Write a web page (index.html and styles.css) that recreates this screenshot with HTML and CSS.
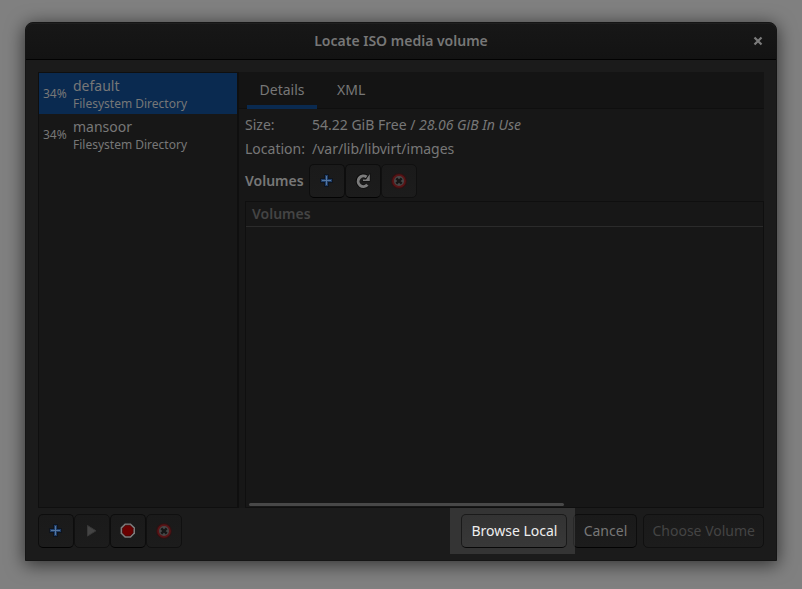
FILE: index.html
```html
<!DOCTYPE html>
<html lang="en">
<head>
<meta charset="utf-8">
<meta name="viewport" content="width=device-width, initial-scale=1">
<title>Locate ISO media volume</title>
<link rel="stylesheet" href="styles.css">
</head>
<body>
<svg class="defs" width="0" height="0" aria-hidden="true">
  <symbol id="icon-add" viewBox="0 0 16 16">
    <path d="M5 1h5v4h4v5h-4v4H5v-4H1V5h4z" fill="#0f141c"/>
    <path d="M6 2h3v4h4v3H9v4H6V9H2V6h4z" fill="#1e3c66"/>
    <path d="M7 3h1v4h4v1H8v4H7V8H3V7h4z" fill="#5577a0"/>
  </symbol>
  <symbol id="icon-refresh" viewBox="0 0 16 16">
    <path d="M12 12.2A5.6 5.6 0 1 1 11.5 3.4" fill="none" stroke="#0b0b0b" stroke-width="4"/>
    <path d="M15.4 0V8.4H7z" fill="#0b0b0b"/>
    <path d="M12.4 11.8A5.3 5.3 0 1 1 11.6 4" fill="none" stroke="#7b7b7b" stroke-width="3"/>
    <path d="M14.8 1V8H8V6.4h3z" fill="#7b7b7b"/>
  </symbol>
  <symbol id="icon-delete" viewBox="0 0 16 16">
    <circle cx="8" cy="8" r="7.8" fill="#321112"/>
    <circle cx="8" cy="8" r="5.9" fill="#484848" stroke="#5a1416" stroke-width="1.8"/>
    <path d="M5.3 5.3l5.4 5.4M10.7 5.3l-5.4 5.4" stroke="#161616" stroke-width="2.4"/>
  </symbol>
  <symbol id="icon-play" viewBox="0 0 16 16">
    <path d="M3.5 2.5l8.5 5.3-8.5 5.3z" fill="#444" stroke="#383838"/>
  </symbol>
  <symbol id="icon-stop" viewBox="0 0 16 16">
    <path d="M4.8 .4h6L15 4.6v6l-4.2 4.2h-6L.6 10.6v-6z" fill="#7b7b7b"/>
    <path d="M5.5 2.3h4.6l3 3v4.6l-3 3H5.5l-3-3V5.3z" fill="#6a0000" stroke="#3c0808" stroke-width=".7"/>
  </symbol>
  <symbol id="icon-close" viewBox="0 0 10 10">
    <path d="M1.5 1.5l7 7M8.5 1.5l-7 7" stroke="#7b7b7b" stroke-width="2.2"/>
  </symbol>
</svg>
<main class="window">
  <header class="titlebar">
    <h1 class="title">Locate ISO media volume</h1>
    <button class="close" type="button" aria-label="Close"><svg><use href="#icon-close"/></svg></button>
  </header>
  <div class="content">
    <div class="panes">
      <ul class="pools">
        <li class="pool selected">
          <span class="usage">34%</span>
          <span class="pool-text"><span class="name">default</span><span class="kind">Filesystem Directory</span></span>
        </li>
        <li class="pool">
          <span class="usage">34%</span>
          <span class="pool-text"><span class="name">mansoor</span><span class="kind">Filesystem Directory</span></span>
        </li>
      </ul>
      <section class="notebook">
        <div class="tabs" role="tablist">
          <button class="tab active" type="button" role="tab" aria-selected="true">Details</button>
          <button class="tab" type="button" role="tab" aria-selected="false">XML</button>
        </div>
        <div class="details">
          <dl class="facts">
            <dt>Size:</dt><dd>54.22 GiB Free / <em>28.06 GiB In Use</em></dd>
            <dt>Location:</dt><dd>/var/lib/libvirt/images</dd>
          </dl>
          <div class="volume-bar">
            <h2 class="heading">Volumes</h2>
            <div class="tools">
              <button class="button tool" type="button" aria-label="Add volume"><svg><use href="#icon-add"/></svg></button>
              <button class="button tool" type="button" aria-label="Refresh volumes"><svg><use href="#icon-refresh"/></svg></button>
              <button class="button tool" type="button" aria-label="Delete volume" disabled><svg><use href="#icon-delete"/></svg></button>
            </div>
          </div>
          <div class="volumes">
            <table class="volume-table">
              <thead><tr><th scope="col">Volumes</th></tr></thead>
              <tbody></tbody>
            </table>
            <div class="scrollbar"></div>
          </div>
        </div>
      </section>
    </div>
    <footer class="actions">
      <div class="tools">
        <button class="button tool" type="button" aria-label="Add pool"><svg><use href="#icon-add"/></svg></button>
        <button class="button tool" type="button" aria-label="Start pool" disabled><svg><use href="#icon-play"/></svg></button>
        <button class="button tool" type="button" aria-label="Stop pool"><svg><use href="#icon-stop"/></svg></button>
        <button class="button tool" type="button" aria-label="Delete pool" disabled><svg><use href="#icon-delete"/></svg></button>
      </div>
      <div class="choices">
        <div class="spotlight"><button class="button browse" type="button">Browse Local</button></div>
        <button class="button" type="button">Cancel</button>
        <button class="button" type="button" disabled>Choose Volume</button>
      </div>
    </footer>
  </div>
</main>
</body>
</html>
```

FILE: styles.css
```css
* {
  box-sizing: border-box;
}

body {
  display: flex;
  min-height: 100vh;
  margin: 0;
  padding: 22px 25px 28px;
  background: #808080;
  color: #777;
  font: 14px/20px "Noto Sans", "Open Sans", sans-serif;
}

button {
  font: inherit;
  color: inherit;
}

svg {
  display: block;
  width: 16px;
  height: 16px;
}

.defs {
  position: absolute;
  width: 0;
  height: 0;
}

.window {
  display: flex;
  flex: 1;
  flex-direction: column;
  min-width: 0;
  border: 1px solid #151515;
  border-radius: 8px 8px 0 0;
  background: #1b1b1b;
  box-shadow: 0 3px 18px 1px rgba(0, 0, 0, 0.6);
}

.titlebar {
  display: grid;
  grid-template-columns: 36px 1fr 36px;
  align-items: center;
  height: 37px;
  border-bottom: 1px solid #020202;
  border-radius: 7px 7px 0 0;
  background: linear-gradient(#171717, #131313);
  box-shadow: inset 0 1px #1f1f1f;
}

.title,
.heading {
  margin: 0;
  font-size: 14px;
  font-weight: 600;
}

.title {
  grid-column: 2;
  text-align: center;
}

.close {
  display: grid;
  place-items: center;
  height: 36px;
  padding: 0;
  border: 0;
  background: none;
}

.close svg {
  width: 10px;
  height: 10px;
}

.content {
  display: flex;
  flex: 1;
  flex-direction: column;
  padding: 12px;
}

.panes {
  display: grid;
  flex: 1;
  grid-template-columns: 200px minmax(0, 1fr);
}

.pools {
  margin: 0;
  padding: 0;
  border: 1px solid #0f0f0f;
  background: #171717;
  list-style: none;
}

.pool {
  display: flex;
  align-items: center;
  gap: 4px;
  height: 41px;
  padding: 0 4px;
}

.selected {
  background: #0a2a50;
}

.usage {
  width: 26px;
  font-size: 12px;
}

.pool-text {
  display: grid;
}

.name {
  line-height: 19px;
}

.kind {
  font-size: 12px;
  line-height: 17px;
}

.notebook {
  display: flex;
  flex-direction: column;
  border-left: 1px solid #0f0f0f;
  background: #171717;
}

.tabs {
  display: flex;
  height: 37px;
  padding-left: 8px;
  background: #141414;
  box-shadow: inset 0 -1px #0f0f0f;
}

.tab {
  padding: 3px 12px 0;
  border: 0;
  border-bottom: 4px solid transparent;
  background: none;
}

.tab + .tab {
  margin-left: 8px;
}

.active {
  min-width: 70px;
  border-bottom-color: #0a2a50;
}

.details {
  display: flex;
  flex: 1;
  flex-direction: column;
  padding: 6px 0 0 6px;
}

.facts {
  display: grid;
  grid-template-columns: 59px 1fr;
  gap: 4px 8px;
  margin: 0;
}

.facts dd {
  margin: 0;
}

.volume-bar {
  display: flex;
  align-items: center;
  gap: 6px;
  margin: 5px 0 3px;
}

.heading {
  width: 58px;
}

.tools {
  display: flex;
}

.button {
  height: 34px;
  padding: 0 8px;
  border: 1px solid #0d0d0d;
  border-bottom-color: #030303;
  border-radius: 5px;
  background: linear-gradient(#1a1a1a, #1c1c1c);
  white-space: nowrap;
}

.button:disabled {
  border-color: #101010;
  color: #444;
}

.tool {
  display: grid;
  place-items: center;
  width: 36px;
  padding: 0;
}

.volumes {
  display: flex;
  flex: 1;
  flex-direction: column;
  justify-content: space-between;
  border: 1px solid #0f0f0f;
}

.volume-table {
  width: 100%;
  border-spacing: 0;
}

.volume-table th {
  height: 25px;
  padding: 0 6px;
  border-bottom: 1px solid #2b2b2b;
  color: #444;
  font-weight: 600;
  text-align: left;
}

.scrollbar {
  width: 61%;
  height: 3px;
  margin: 0 3px 1px;
  border-radius: 2px;
  background: #484848;
}

.actions {
  display: flex;
  justify-content: space-between;
  padding-top: 6px;
}

.choices {
  display: flex;
  gap: 6px;
}

.choices .button {
  min-width: 64px;
}

.spotlight {
  position: relative;
}

.spotlight::before {
  position: absolute;
  z-index: 1;
  inset: -6px -8px -6px -11px;
  background: rgba(255, 255, 255, 0.115);
  content: "";
  pointer-events: none;
}

.browse {
  position: relative;
  z-index: 2;
  padding: 0 9px;
  border-color: #1a1a1a;
  border-bottom-color: #080808;
  background: linear-gradient(#333, #383838);
  color: #eee;
}
```
